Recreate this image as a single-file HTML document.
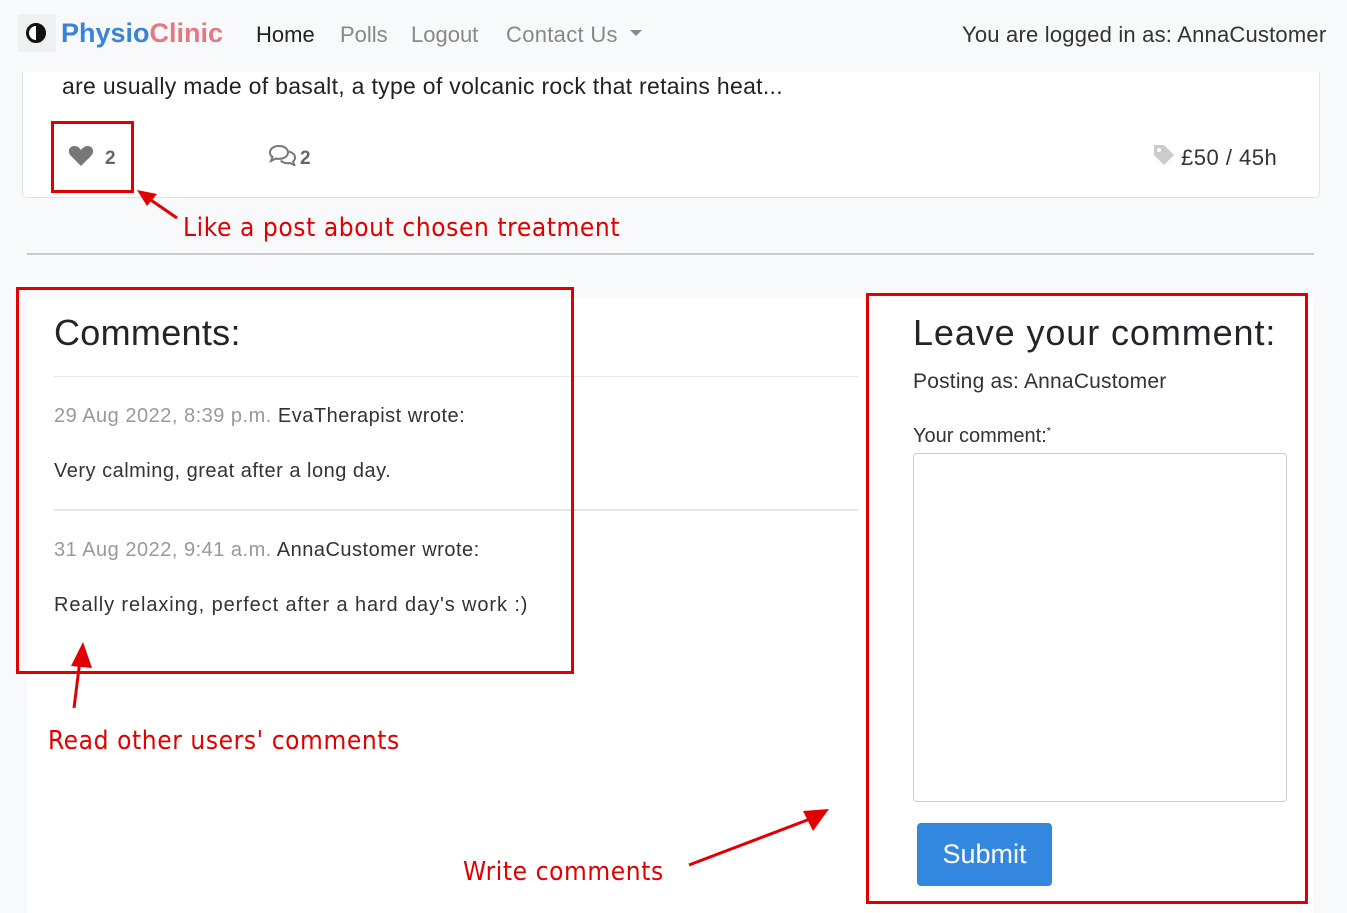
<!DOCTYPE html>
<html><head><meta charset="utf-8"><style>
*{box-sizing:border-box;margin:0;padding:0}
body{width:1347px;height:913px;background:#f8f9fa;position:relative;overflow:hidden;font-family:"Liberation Sans",sans-serif;color:#212529}
.a{position:absolute;white-space:nowrap}
.r{position:absolute;border:3px solid #e00000}
.red{color:#e00000;font-size:26px;letter-spacing:0.6px;font-family:"DejaVu Sans Condensed","Liberation Sans",sans-serif}
.c{font-size:20px;color:#333;letter-spacing:0.5px}
</style></head><body>
<div class="a" style="left:18px;top:14px;width:38px;height:38px;background:#eef0f2"></div>
<div class="a" style="left:26px;top:23px;width:20px;height:20px;border-radius:50%;border:3px solid #111;background:linear-gradient(90deg,#fff 50%,#111 50%)"></div>
<div class="a" style="left:61px;top:18px;font-size:27px;font-weight:bold"><span style="color:#3b83d6">Physio</span><span style="color:#e27a82">Clinic</span></div>
<div class="a" style="left:256px;top:22px;font-size:22px;color:#222">Home</div>
<div class="a" style="left:340px;top:22px;font-size:22px;color:#888">Polls</div>
<div class="a" style="left:411px;top:22px;font-size:22px;color:#888">Logout</div>
<div class="a" style="left:506px;top:22px;font-size:22px;color:#888;letter-spacing:0.3px">Contact Us</div>
<div class="a" style="left:630px;top:30px;border:6px solid transparent;border-top:6px solid #888"></div>
<div class="a" style="left:962px;top:22px;font-size:22px;color:#333;letter-spacing:0.2px">You are logged in as: AnnaCustomer</div>

<div class="a" style="left:22px;top:72px;width:1298px;height:126px;background:#fff;border:1px solid #dde3ea;border-top:none;border-radius:0 0 5px 5px"></div>
<div class="a" style="left:62px;top:73px;font-size:23px;color:#222;letter-spacing:0.3px">are usually made of basalt, a type of volcanic rock that retains heat...</div>
<svg class="a" style="left:68px;top:145px" width="26" height="22" viewBox="0 0 26 22"><path d="M13 21 L3 11 C-1 7 1 1 6.5 1 C9.5 1 11.5 3 13 5 C14.5 3 16.5 1 19.5 1 C25 1 27 7 23 11Z" fill="#777"/></svg>
<div class="a" style="left:105px;top:148px;font-size:19px;font-weight:bold;color:#666">2</div>
<svg class="a" style="left:268px;top:144px" width="30" height="22" viewBox="0 0 30 22"><path d="M11 2C5.5 2 2 5 2 8.5c0 2 1 3.5 2.5 4.5L3 17l5-2.5c1 .3 2 .4 3 .4 5.5 0 9-3 9-6.5S16.5 2 11 2z" fill="none" stroke="#777" stroke-width="2"/><path d="M21 7.5c3.5 1 6 3.2 6 6 0 1.6-.8 3-2 4l1.3 3.5-4.5-2c-3.5.8-7.5-.5-9-2.5" fill="none" stroke="#777" stroke-width="2"/></svg>
<div class="a" style="left:300px;top:148px;font-size:19px;font-weight:bold;color:#666">2</div>
<svg class="a" style="left:1152px;top:143px" width="24" height="24" viewBox="0 0 24 24"><path d="M2 2h10l10 10-10 10L2 12z" fill="#ccc"/><circle cx="7" cy="7" r="2" fill="#fff"/></svg>
<div class="a" style="left:1181px;top:145px;font-size:22px;color:#333;letter-spacing:0.5px">£50 / 45h</div>
<div class="r" style="left:51px;top:121px;width:83px;height:72px"></div>
<svg class="a" style="left:135px;top:188px" width="45" height="35"><line x1="42" y1="30" x2="10" y2="8" stroke="#e00000" stroke-width="3"/><polygon points="2,2 22,6 12,18" fill="#e00000"/></svg>
<div class="a red" style="left:183px;top:213px">Like a post about chosen treatment</div>
<div class="a" style="left:27px;top:253px;width:1287px;height:2px;background:#c8cbce"></div>

<div class="a" style="left:27px;top:298px;width:1286px;height:615px;background:#fff"></div>
<div class="a" style="left:54px;top:312px;font-size:36px;color:#212529;letter-spacing:0.3px">Comments:</div>
<div class="a" style="left:54px;top:376px;width:804px;height:1px;background:#e6e6e6"></div>
<div class="a c" style="left:54px;top:405px"><span style="color:#999">29 Aug 2022, 8:39 p.m.</span> EvaTherapist wrote:</div>
<div class="a c" style="left:54px;top:460px">Very calming, great after a long day.</div>
<div class="a" style="left:54px;top:509px;width:804px;height:2px;background:#e6e6e6"></div>
<div class="a c" style="left:54px;top:539px"><span style="color:#999">31 Aug 2022, 9:41 a.m.</span> AnnaCustomer wrote:</div>
<div class="a c" style="left:54px;top:594px;letter-spacing:0.9px">Really relaxing, perfect after a hard day's work :)</div>
<div class="r" style="left:16px;top:287px;width:558px;height:387px"></div>
<svg class="a" style="left:65px;top:640px" width="35" height="72"><line x1="9" y1="68" x2="15" y2="20" stroke="#e00000" stroke-width="3"/><polygon points="18,2 27,28 6,26" fill="#e00000"/></svg>
<div class="a red" style="left:48px;top:726px">Read other users' comments</div>
<div class="a red" style="left:463px;top:857px">Write comments</div>
<svg class="a" style="left:685px;top:805px" width="150" height="65"><line x1="4" y1="60" x2="125" y2="14" stroke="#e00000" stroke-width="3"/><polygon points="144,4 128,26 118,6" fill="#e00000"/></svg>

<div class="a" style="left:913px;top:312px;font-size:36px;color:#212529;letter-spacing:0.9px">Leave your comment:</div>
<div class="a" style="left:913px;top:370px;font-size:21px;color:#333;letter-spacing:0.2px">Posting as: AnnaCustomer</div>
<div class="a" style="left:913px;top:425px;font-size:20px;color:#333">Your comment:<sup style="font-size:11px">*</sup></div>
<div class="a" style="left:913px;top:453px;width:374px;height:349px;border:1px solid #ccc;border-radius:4px;background:#fff"></div>
<div class="a" style="left:917px;top:823px;width:135px;height:63px;background:#3487de;border-radius:4px;color:#fff;font-size:27px;text-align:center;line-height:63px">Submit</div>
<div class="r" style="left:866px;top:293px;width:442px;height:611px"></div>
</body></html>
